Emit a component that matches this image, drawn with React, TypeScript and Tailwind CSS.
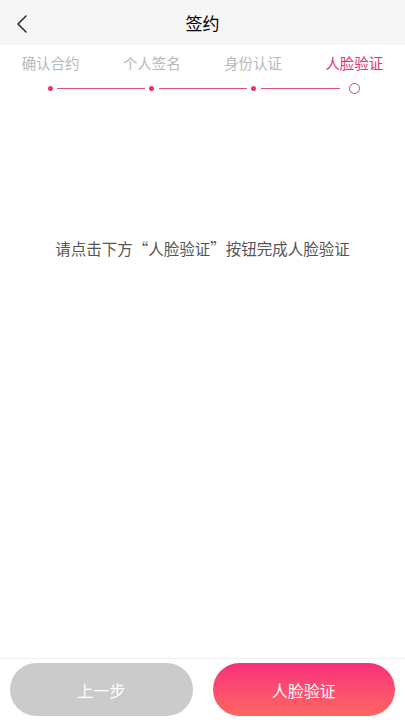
const font = { fontFamily: '"Noto Sans CJK SC", "Noto Sans", sans-serif' };

const steps = ["确认合约", "个人签名", "身份认证", "人脸验证"];

export default function App() {
  return (
    <div className="flex h-[720px] w-full flex-col bg-white" style={font}>
      {/* header */}
      <div className="relative flex h-[45px] shrink-0 items-center justify-center bg-[#f6f6f6]">
        <button className="absolute left-[11px] top-[10px] p-1">
          <svg width="14" height="20" viewBox="0 0 14 20" fill="none">
            <path d="M11 2 L3 10 L11 18" stroke="#222" strokeWidth="1.5" strokeLinecap="round" strokeLinejoin="round" />
          </svg>
        </button>
        <h1 className="text-[17px] font-normal text-[#000]">签约</h1>
      </div>

      {/* steps */}
      <div className="grid grid-cols-4 pt-[6px]">
        {steps.map((s, i) => (
          <div
            key={s}
            className={
              "text-center text-[14.5px] leading-[24px] " +
              (i === 3 ? "text-[#e6336f]" : "text-[#b8b8b8]")
            }
          >
            {s}
          </div>
        ))}
      </div>
      <div className="mt-[8px] flex items-center pl-[48px]">
        <span className="h-[5px] w-[5px] rounded-full bg-[#e6336f]" />
        <span className="ml-[4px] mr-[4px] h-px w-[88px] bg-[#de4f86]" />
        <span className="h-[5px] w-[5px] rounded-full bg-[#e6336f]" />
        <span className="ml-[5px] mr-[4px] h-px w-[88px] bg-[#de4f86]" />
        <span className="h-[5px] w-[5px] rounded-full bg-[#e6336f]" />
        <span className="ml-[5px] mr-[9px] h-px w-[79px] bg-[#de4f86]" />
        <span className="h-[11px] w-[11px] rounded-full border border-[#e6336f]" />
      </div>

      {/* content */}
      <div className="flex-1 pt-[143px] text-center text-[15.5px] text-[#555]">
        请点击下方“人脸验证”按钮完成人脸验证
      </div>

      {/* footer */}
      <div className="flex shrink-0 gap-[20px] border-t border-[#f0f0f0] px-[10px] pb-[4px] pt-[4px]">
        <button className="h-[53px] flex-1 rounded-full bg-[#cbcbcb] text-[16px] text-white">
          上一步
        </button>
        <button className="h-[53px] flex-1 rounded-full bg-gradient-to-b from-[#f72d7c] to-[#fe6560] text-[16px] text-white">
          人脸验证
        </button>
      </div>
    </div>
  );
}
